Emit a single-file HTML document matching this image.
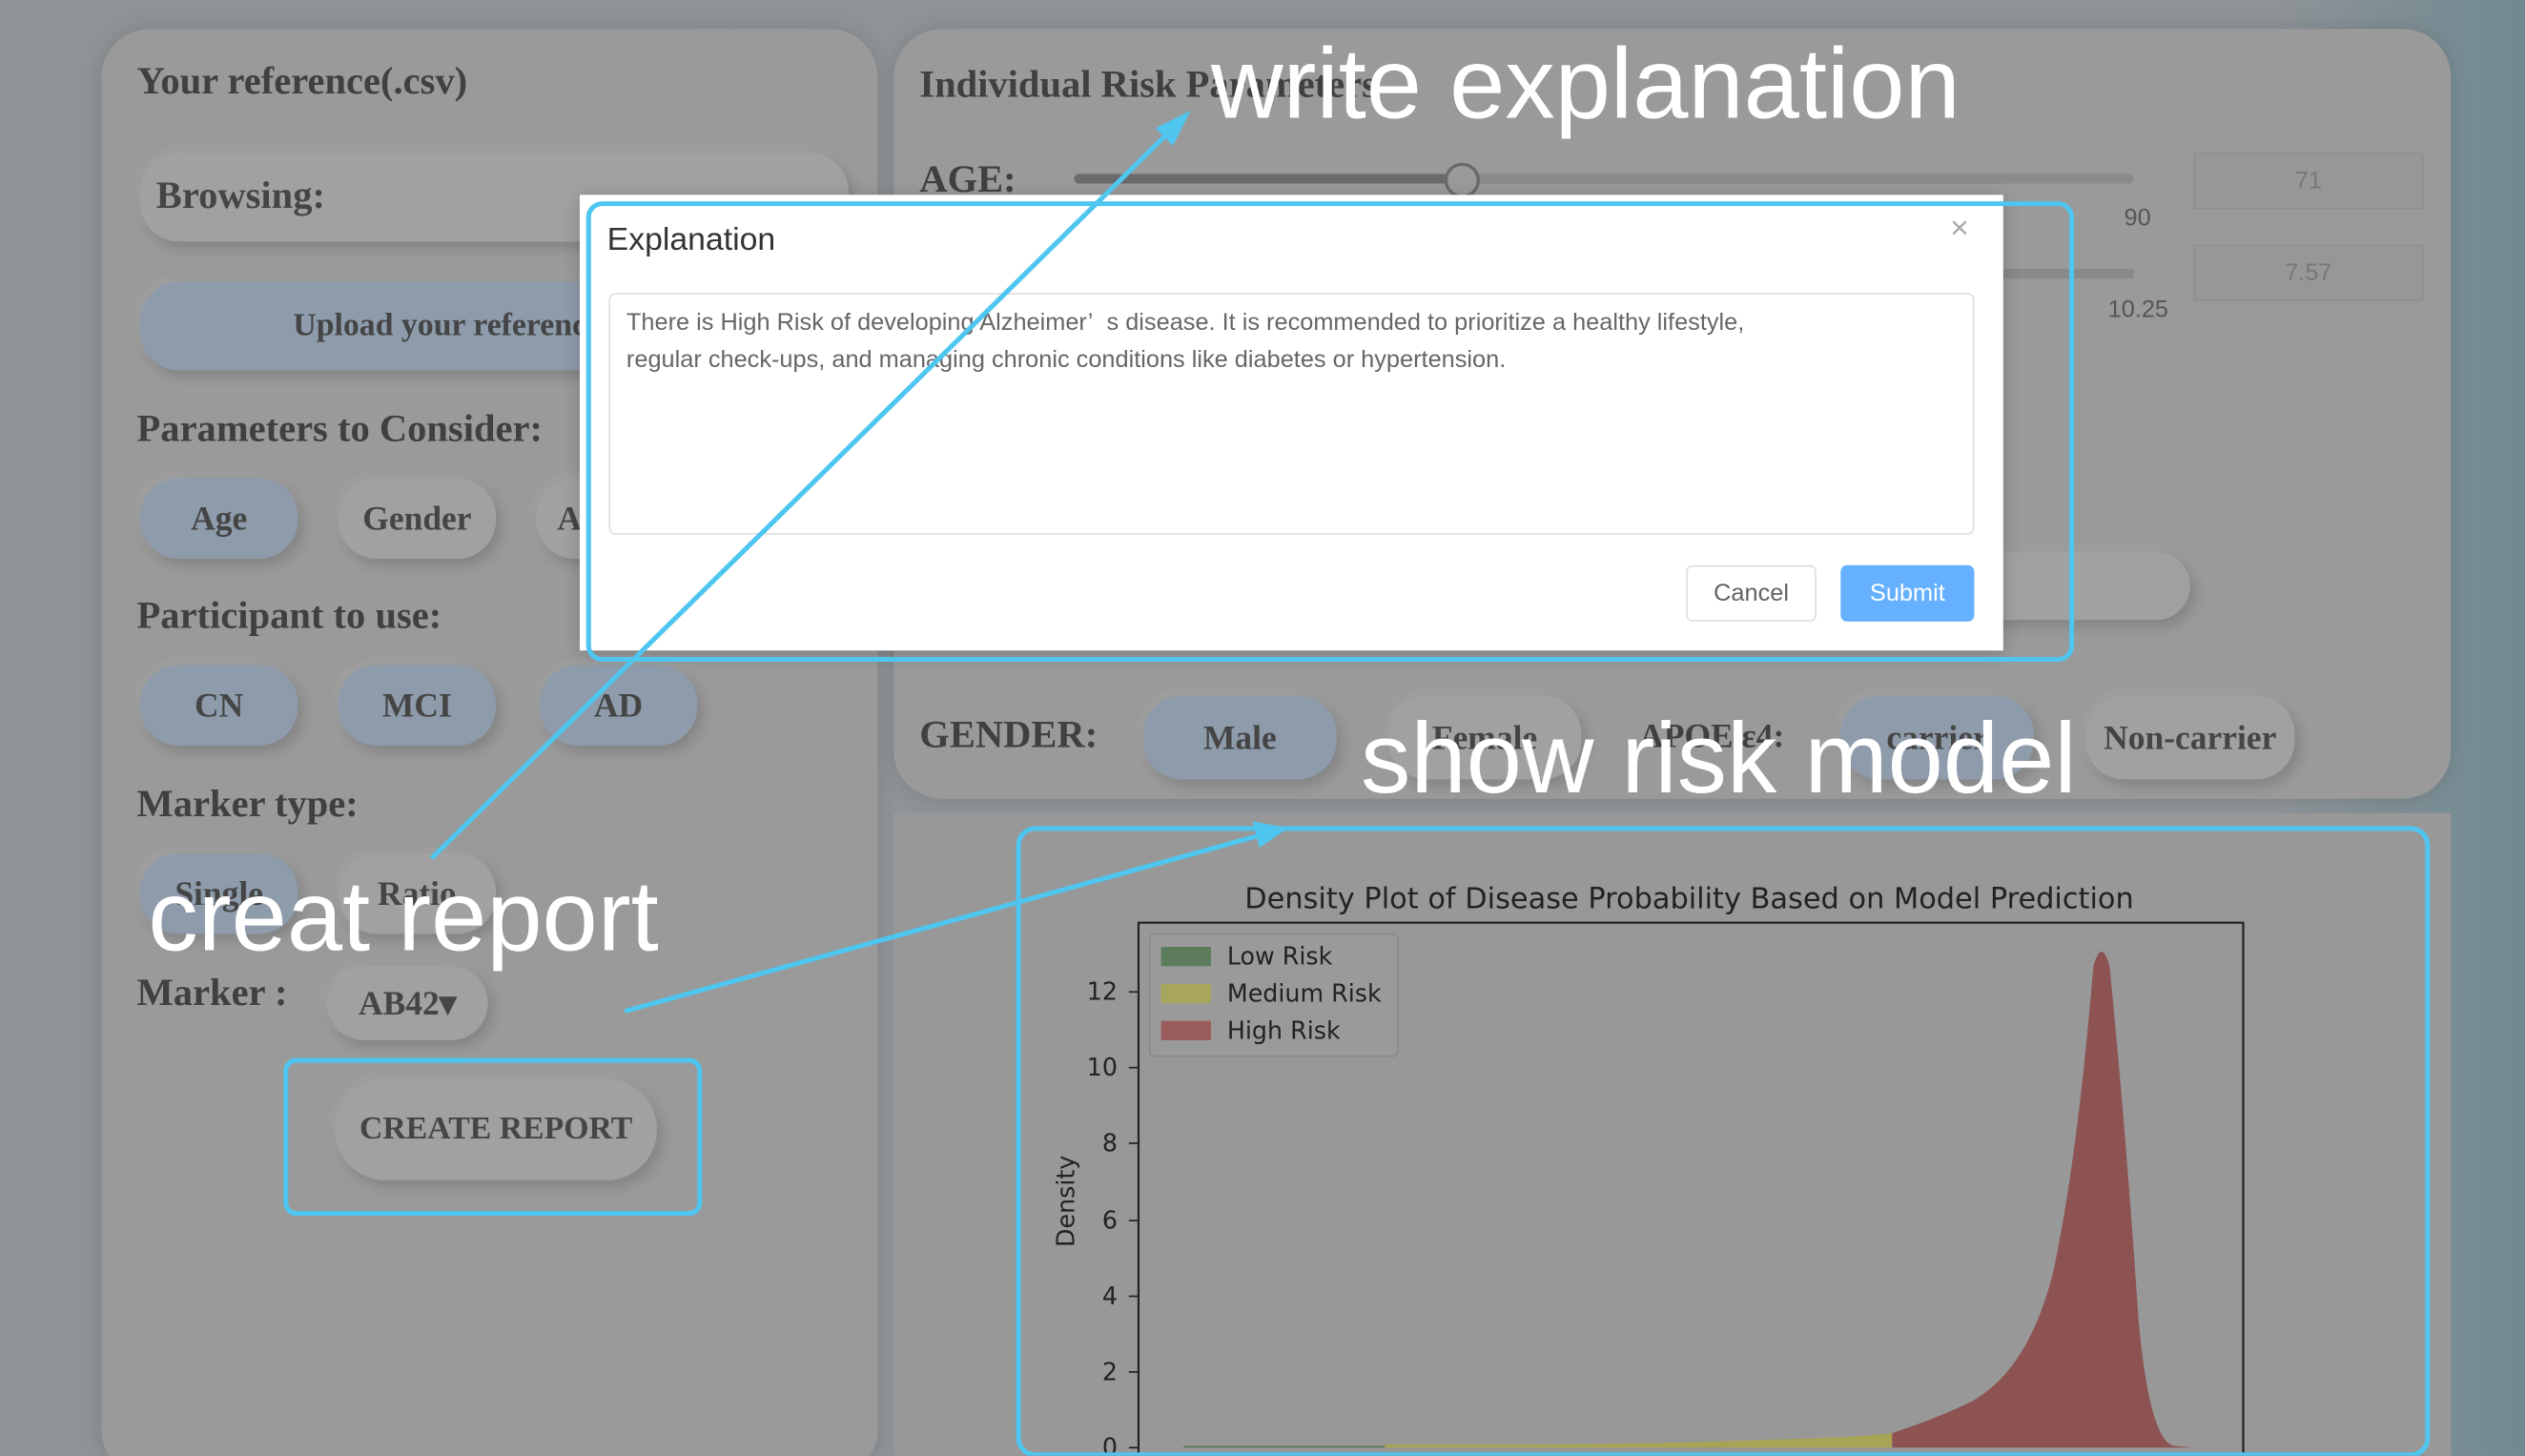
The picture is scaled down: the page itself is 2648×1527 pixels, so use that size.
<!DOCTYPE html>
<html><head><meta charset="utf-8"><style>
html,body{margin:0;padding:0;width:2648px;height:1526px;overflow:hidden;background:#8e9397}
#s{position:absolute;left:0;top:0;width:1568px;height:904px;transform:scale(1.68878);transform-origin:0 0;background:linear-gradient(90deg,#8f9396 0%,#8e9397 90%,#708a92 100%);overflow:hidden;font-family:"Liberation Serif",serif}
.a{position:absolute}
.panel{background:#9a9a9a;border-radius:30px;box-shadow:0 0 12px rgba(0,0,0,.12)}
.h{font-weight:bold;color:#404040;font-size:24px;white-space:nowrap}
.pill{position:absolute;border-radius:24px;background:#a1a1a1;box-shadow:3px 4px 8px rgba(0,0,0,.15),-2px -2px 6px rgba(255,255,255,.08);font-weight:bold;color:#454545;font-size:21px;display:flex;align-items:center;justify-content:center;white-space:nowrap}
.b{background:#8d9bab}
.ann{position:absolute;color:#fff;font-family:"Liberation Sans",sans-serif;font-size:62px;white-space:nowrap;line-height:1}
.m{font-family:"Liberation Sans","DejaVu Sans",sans-serif}
</style></head><body><div id="s">
<div class="a panel" style="left:63px;top:18px;width:482px;height:900px"></div>
<div class="a panel" style="left:555px;top:18px;width:967px;height:478px"></div>
<div class="a" style="left:555px;top:505px;width:967px;height:420px;background:#989898"></div>

<div class="a h" style="left:85px;top:38px">Your reference(.csv)</div>
<div class="pill" style="left:87px;top:95px;width:440px;height:55px;justify-content:flex-start;padding-left:10px;box-sizing:border-box;font-size:24px">Browsing:</div>
<div class="pill b" style="left:87px;top:175px;width:300px;height:55px;font-size:20px;justify-content:flex-start;padding-left:95px;box-sizing:border-box">Upload your reference</div>
<div class="a h" style="left:85px;top:254px">Parameters to Consider:</div>
<div class="pill b" style="left:87px;top:297px;width:98px;height:50px">Age</div>
<div class="pill" style="left:210px;top:297px;width:98px;height:50px">Gender</div>
<div class="pill" style="left:333px;top:297px;width:60px;height:50px;justify-content:flex-start;padding-left:13px;box-sizing:border-box">A</div>
<div class="a h" style="left:85px;top:370px">Participant to use:</div>
<div class="pill b" style="left:87px;top:413px;width:98px;height:50px">CN</div>
<div class="pill b" style="left:210px;top:413px;width:98px;height:50px">MCI</div>
<div class="pill b" style="left:335px;top:413px;width:98px;height:50px">AD</div>
<div class="a h" style="left:85px;top:487px">Marker type:</div>
<div class="pill b" style="left:87px;top:530px;width:98px;height:50px">Single</div>
<div class="pill" style="left:210px;top:530px;width:98px;height:50px">Ratio</div>
<div class="a h" style="left:85px;top:604px">Marker :</div>
<div class="pill" style="left:203px;top:600px;width:100px;height:46px">AB42▾</div>
<div class="pill" style="left:208px;top:670px;width:200px;height:63px;border-radius:32px;font-size:20px">CREATE REPORT</div>

<div class="a h" style="left:571px;top:40px">Individual Risk Parameters</div>
<div class="a h" style="left:571px;top:99px">AGE:</div>
<div class="a" style="left:667px;top:108px;width:658px;height:6px;background:#8a8a8a;border-radius:3px"></div>
<div class="a" style="left:667px;top:108px;width:240px;height:6px;background:#6a6a6a;border-radius:3px"></div>
<div class="a" style="left:897px;top:101px;width:18px;height:18px;border-radius:50%;border:2px solid #6a6a6a;background:#9a9a9a"></div>
<div class="a m" style="left:1362px;top:95px;width:141px;height:33px;border:1px solid #8f8f8f;background:#979797;color:#777;font-size:15px;text-align:center;line-height:33px">71</div>
<div class="a m" style="left:1362px;top:152px;width:141px;height:33px;border:1px solid #8f8f8f;background:#979797;color:#777;font-size:15px;text-align:center;line-height:33px">7.57</div>
<div class="a m" style="left:1319px;top:127px;color:#555;font-size:15px">90</div>
<div class="a m" style="left:1309px;top:184px;color:#555;font-size:15px">10.25</div>
<div class="a" style="left:1240px;top:167px;width:85px;height:6px;background:#8a8a8a"></div>
<div class="pill" style="left:1200px;top:343px;width:160px;height:42px"></div>
<div class="a h" style="left:571px;top:444px">GENDER:</div>
<div class="pill b" style="left:710px;top:432px;width:120px;height:52px">Male</div>
<div class="pill" style="left:862px;top:432px;width:120px;height:52px">Female</div>
<div class="a h" style="left:1018px;top:445px;font-size:21px">APOE ε4:</div>
<div class="pill b" style="left:1143px;top:432px;width:120px;height:52px">carrier</div>
<div class="pill" style="left:1295px;top:432px;width:130px;height:52px">Non-carrier</div>

<svg class="a" style="left:632px;top:514px" width="876" height="390" viewBox="632 514 876 390">
<text x="1049" y="564" text-anchor="middle" font-family="DejaVu Sans,sans-serif" font-size="18" fill="#222">Density Plot of Disease Probability Based on Model Prediction</text>
<rect x="707" y="573" width="686" height="340" fill="none" stroke="#222" stroke-width="1.3"/>
<g font-family="DejaVu Sans,sans-serif" font-size="15" fill="#222" text-anchor="end">
<text x="694" y="621">12</text><text x="694" y="668">10</text><text x="694" y="715">8</text><text x="694" y="763">6</text><text x="694" y="810">4</text><text x="694" y="857">2</text><text x="694" y="904">0</text></g>
<g stroke="#222"><line x1="701" y1="616" x2="707" y2="616"/><line x1="701" y1="663" x2="707" y2="663"/><line x1="701" y1="710" x2="707" y2="710"/><line x1="701" y1="758" x2="707" y2="758"/><line x1="701" y1="805" x2="707" y2="805"/><line x1="701" y1="852" x2="707" y2="852"/><line x1="701" y1="899" x2="707" y2="899"/></g>
<text transform="translate(667,746) rotate(-90)" text-anchor="middle" font-family="DejaVu Sans,sans-serif" font-size="15" fill="#222">Density</text>
<path d="M735 899 L860 899 L860 898 L735 898Z" fill="#56785a"/>
<path d="M860 899 L860 897 Q1000 898 1100 894 Q1150 893 1175 890 L1175 899Z" fill="#a8a455"/>
<path d="M1175 899 L1175 890 Q1205 880 1225 870 Q1260 850 1275 790 Q1290 720 1300 600 Q1305 582 1310 600 Q1320 700 1328 820 Q1335 895 1350 898 L1362 899Z" fill="#8d5252"/>
<rect x="714" y="580" width="154" height="76" rx="3" fill="#9a9a9a" stroke="#8a8a8a"/>
<rect x="721" y="588" width="31" height="12" fill="#5c7c5c"/><rect x="721" y="611" width="31" height="12" fill="#a8a65c"/><rect x="721" y="634" width="31" height="12" fill="#9a5c5c"/>
<g font-family="DejaVu Sans,sans-serif" font-size="15" fill="#222"><text x="762" y="599">Low Risk</text><text x="762" y="622">Medium Risk</text><text x="762" y="645">High Risk</text></g>
</svg>

<div class="a" style="left:360px;top:121px;width:884px;height:283px;background:#fff;box-shadow:0 2px 10px rgba(0,0,0,.2)"></div>
<div class="a m" style="left:377px;top:138px;font-size:20px;color:#333">Explanation</div>
<div class="a m" style="left:1211px;top:131px;font-size:20px;color:#aaa">×</div>
<div class="a m" style="left:378px;top:182px;width:848px;height:150px;border:1px solid #dcdfe6;border-radius:4px;box-sizing:border-box;padding:6px 10px;font-size:15px;line-height:23px;color:#666;white-space:nowrap">There is High Risk of developing Alzheimer’&nbsp; s disease. It is recommended to prioritize a healthy lifestyle,<br>regular check-ups, and managing chronic conditions like diabetes or hypertension.</div>
<div class="a m" style="left:1047px;top:351px;width:81px;height:35px;border:1px solid #dcdfe6;border-radius:4px;box-sizing:border-box;font-size:15px;color:#606266;text-align:center;line-height:33px">Cancel</div>
<div class="a m" style="left:1143px;top:351px;width:83px;height:35px;background:#66b1ff;border-radius:4px;font-size:15px;color:#fff;text-align:center;line-height:35px">Submit</div>

<div class="a" style="left:364px;top:125px;width:924px;height:286px;border:3px solid #4ec6f0;border-radius:10px;box-sizing:border-box"></div>
<div class="a" style="left:631px;top:513px;width:878px;height:392px;border:3px solid #4ec6f0;border-radius:12px;box-sizing:border-box"></div>
<div class="a" style="left:176px;top:657px;width:260px;height:98px;border:3px solid #4ec6f0;border-radius:8px;box-sizing:border-box"></div>
<svg class="a" style="left:0;top:0" width="1568" height="904">
<g stroke="#4ec6f0" stroke-width="3" fill="#4ec6f0">
<line x1="268" y1="533" x2="728" y2="80"/><path d="M736 72 L720 80 L728 88Z"/>
<line x1="388" y1="628" x2="785" y2="518"/><path d="M796 515 L780 512 L783 524Z"/>
</g></svg>
<div class="ann" style="left:752px;top:22px">write explanation</div>
<div class="ann" style="left:845px;top:441px">show risk model</div>
<div class="ann" style="left:92px;top:539px">creat report</div>
</div></body></html>
